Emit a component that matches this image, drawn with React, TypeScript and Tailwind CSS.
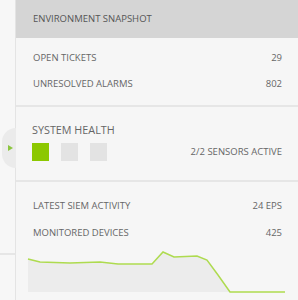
import React from 'react';

const rows1 = [
  { label: 'OPEN TICKETS', value: '29' },
  { label: 'UNRESOLVED ALARMS', value: '802' },
];

const rows2 = [
  { label: 'LATEST SIEM ACTIVITY', value: '24 EPS' },
  { label: 'MONITORED DEVICES', value: '425' },
];

// chart points, in panel coordinates (chart box starts at panel x=0, y=247)
const pts: [number, number][] = [
  [12, 12], [24, 15], [54, 16], [84, 15], [102, 17], [136, 17], [147, 5],
  [158, 10], [181, 9], [191, 13], [202, 28], [214, 45], [269, 45],
];

const Row: React.FC<{ label: string; value: string }> = ({ label, value }) => (
  <div className="flex h-[26px] items-center justify-between">
    <span>{label}</span>
    <span>{value}</span>
  </div>
);

const App: React.FC = () => {
  const line = pts.map((p) => p.join(',')).join(' ');
  const area = `${line} 269,45 12,45`;

  return (
    <div
      className="relative flex h-[300px] w-[298px] overflow-hidden bg-[#f7f7f7] text-[9.5px] text-[#666]"
      style={{ fontFamily: '"Open Sans", "Liberation Sans", sans-serif' }}
    >
      {/* left strip */}
      <div className="flex w-[16px] shrink-0 flex-col border-r border-[#e4e4e4]">
        <div className="mt-[253px] h-[2px] bg-[#e6e6e6]" />
      </div>

      {/* toggle */}
      <div className="absolute left-[2px] top-[128px] flex h-[40px] w-[14px] items-center rounded-l-full bg-[#ebebeb] pl-[6px]">
        <svg width="5" height="6" viewBox="0 0 5 6">
          <path d="M0 0 L5 3 L0 6 Z" fill="#8cc63f" />
        </svg>
      </div>

      {/* panel */}
      <div className="flex flex-1 flex-col bg-[#f6f6f6]">
        <div className="flex h-[38px] items-center bg-[#d5d5d5] px-[17px] text-[#555]">
          ENVIRONMENT SNAPSHOT
        </div>

        <div className="border-b-2 border-[#e6e6e6] pl-[17px] pr-[16px] pt-[7px] pb-[8px]">
          {rows1.map((r) => (
            <Row key={r.label} {...r} />
          ))}
        </div>

        <div className="border-b-2 border-[#e6e6e6] pl-[16px] pr-[16px] pt-[16px] pb-[19px]">
          <div className="text-[10.8px] leading-[14px] text-[#666]">SYSTEM HEALTH</div>
          <div className="mt-[6px] flex items-center justify-between">
            <div className="flex gap-[12px]">
              <div className="h-[18px] w-[17px] bg-[#8cc800]" />
              <div className="h-[18px] w-[17px] bg-[#e3e3e3]" />
              <div className="h-[18px] w-[17px] bg-[#e3e3e3]" />
            </div>
            <span>2/2 SENSORS ACTIVE</span>
          </div>
        </div>

        <div className="pl-[17px] pr-[16px] pt-[11px]">
          {rows2.map((r) => (
            <div key={r.label} className="flex h-[27px] items-center justify-between">
              <span>{r.label}</span>
              <span>{r.value}</span>
            </div>
          ))}
        </div>

        <svg width="282" height="53" viewBox="0 0 282 53">
          <polygon points={area} fill="#ececec" />
          <polyline points={line} fill="none" stroke="#aedb4f" strokeWidth="1.5" />
        </svg>
      </div>
    </div>
  );
};

export default App;
